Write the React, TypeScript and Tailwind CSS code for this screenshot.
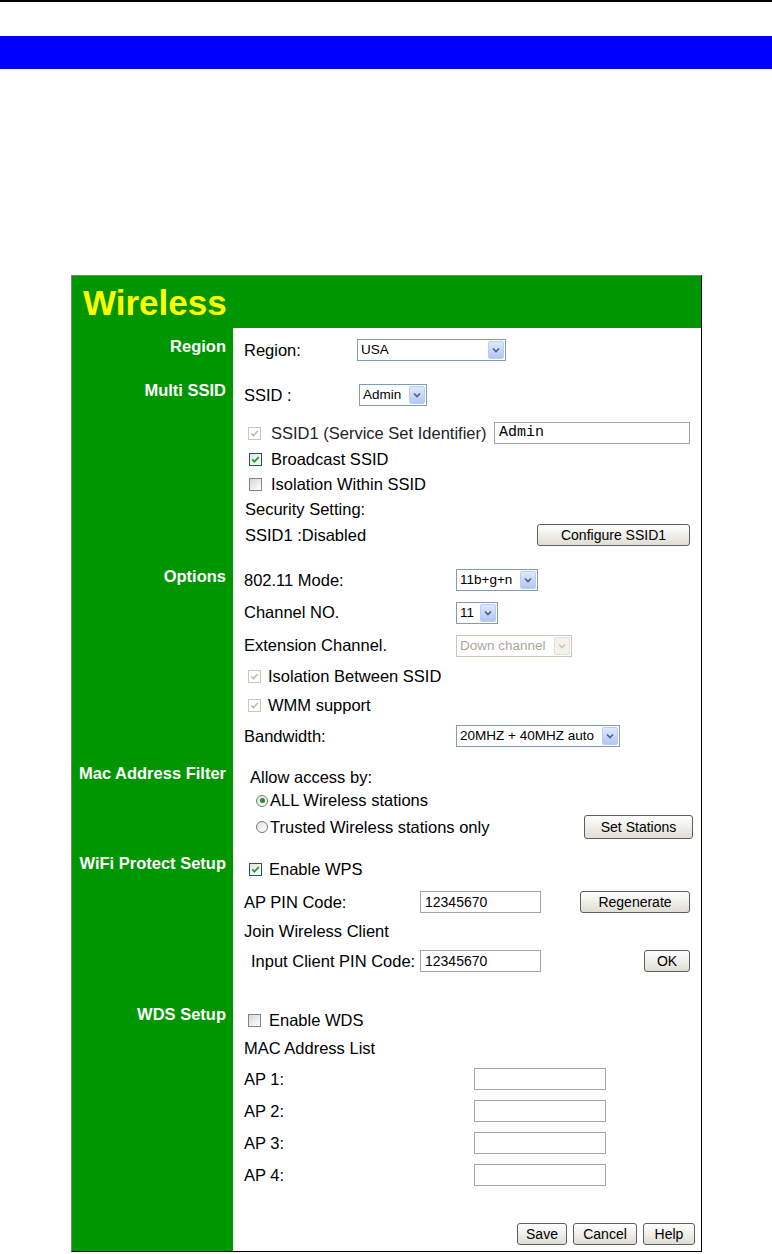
import React from 'react';

function Select({ value, w, disabled }: { value: string; w: string; disabled?: boolean }) {
  return (
    <div
      className={`${w} flex h-[22px] items-center border bg-white ${
        disabled ? 'border-[#c9c7ba] text-[#aca899]' : 'border-[#7f9db9] text-black'
      }`}
    >
      <span className="flex-1 truncate pl-[3px] text-[13.5px] leading-none">{value}</span>
      <span
        className={`m-px flex h-[18px] w-[16px] shrink-0 items-center justify-center rounded-[2px] border ${
          disabled ? 'border-[#e2e0d6] bg-[#f3f2ec]' : 'border-[#bccdf3] bg-linear-to-b from-[#dfe8fc] to-[#b3c7f4]'
        }`}
      >
        <svg viewBox="0 0 16 16" className="h-[12px] w-[12px]">
          <path d="M4 6 L8 10 L12 6" fill="none" stroke={disabled ? '#c9c7ba' : '#4d6185'} strokeWidth="2.2" />
        </svg>
      </span>
    </div>
  );
}

function Box({ checked, disabled }: { checked?: boolean; disabled?: boolean }) {
  return (
    <span
      className={`flex h-[13px] w-[13px] shrink-0 items-center justify-center border ${
        disabled
          ? 'border-[#cac8bb] bg-white'
          : checked
            ? 'border-[#1c5180] bg-linear-to-br from-[#e4e4df] to-white'
            : 'border-[#7a8796] bg-linear-to-br from-[#d8d8d2] to-white'
      }`}
    >
      {checked && (
        <svg viewBox="0 0 11 11" className="h-[11px] w-[11px]">
          <path
            d="M2.3 5.3 L4.5 7.6 L8.8 3"
            fill="none"
            stroke={disabled ? '#c4c2b4' : '#21a121'}
            strokeWidth="1.8"
          />
        </svg>
      )}
    </span>
  );
}

function Radio({ checked }: { checked?: boolean }) {
  return (
    <span className="flex h-[12px] w-[12px] shrink-0 items-center justify-center rounded-full border border-[#6e7c8a] bg-linear-to-br from-[#e2e2dc] to-white">
      {checked && <span className="h-[5px] w-[5px] rounded-full bg-[#2a8a2a]" />}
    </span>
  );
}

function Btn({ label, w }: { label: string; w: string }) {
  return (
    <button
      type="button"
      className={`${w} flex h-[22px] items-center justify-center rounded-[3px] border border-[#5e5e5e] bg-linear-to-b from-white to-[#dfded4] text-[14px] leading-none text-black`}
    >
      {label}
    </button>
  );
}

function Field({ value, w, mono }: { value?: string; w: string; mono?: boolean }) {
  return (
    <input
      readOnly
      defaultValue={value}
      className={`${w} h-[22px] shrink-0 border border-[#9ea6ae] bg-white pl-[4px] text-black outline-none ${
        mono ? "font-['Liberation_Mono',monospace] text-[15px]" : 'text-[14px]'
      }`}
    />
  );
}

function Label({ text, pt }: { text: string; pt: string }) {
  return <div className={`${pt} pr-[7px] text-right text-[16.5px] font-bold leading-[20px] text-white`}>{text}</div>;
}

export default function App() {
  return (
    <div className="min-h-[1254px] bg-white font-['Liberation_Sans',Arial,sans-serif] text-[16.5px] text-black">
      <div className="h-[2px] bg-black" />
      <div className="mt-[34px] h-[33px] bg-[#0000ff]" />

      <div className="ml-[71px] mt-[206px] w-[631px] border-t border-r border-b border-l border-t-[#808080] border-l-[#808080] border-r-black border-b-black bg-[#009600]">
        <div className="h-[52px] pl-[11px] pt-[10px] text-[35px] font-bold leading-[34px] text-[#ffff00]">Wireless</div>

        <div className="grid grid-cols-[161px_1fr]">
          {/* Region */}
          <Label text="Region" pt="pt-[8px]" />
          <div className="bg-white pl-[11px] pr-[11px] pt-[6px] pb-[6px]">
            <div className="flex h-[32px] items-center">
              <span className="w-[113px]">Region:</span>
              <Select value="USA" w="w-[149px]" />
            </div>
          </div>

          {/* Multi SSID */}
          <Label text="Multi SSID" pt="pt-[8px]" />
          <div className="bg-white pl-[11px] pr-[11px] pt-[7px] pb-[8px]">
            <div className="flex h-[32px] items-center">
              <span className="w-[115px]">SSID :</span>
              <Select value="Admin" w="w-[68px]" />
            </div>
            <div className="mt-[9px] flex h-[26px] items-center pl-[4px]">
              <Box checked disabled />
              <span className="ml-[10px] text-[#222]">SSID1 (Service Set Identifier)</span>
              <span className="ml-auto flex">
                <Field value="Admin" w="w-[196px]" mono />
              </span>
            </div>
            <div className="flex h-[26px] items-center pl-[5px]">
              <Box checked />
              <span className="ml-[9px]">Broadcast SSID</span>
            </div>
            <div className="flex h-[25px] items-center pl-[5px]">
              <Box />
              <span className="ml-[9px]">Isolation Within SSID</span>
            </div>
            <div className="flex h-[25px] items-center pl-px">Security Setting:</div>
            <div className="flex h-[26px] items-center pl-px">
              <span>SSID1 :Disabled</span>
              <span className="ml-auto">
                <Btn label="Configure SSID1" w="w-[153px]" />
              </span>
            </div>
          </div>

          {/* Options */}
          <Label text="Options" pt="pt-[10px]" />
          <div className="bg-white pl-[11px] pr-[11px] pt-[8px] pb-[4px]">
            <div className="flex h-[32px] items-center">
              <span className="w-[212px]">802.11 Mode:</span>
              <Select value="11b+g+n" w="w-[82px]" />
            </div>
            <div className="flex h-[33px] items-center">
              <span className="w-[212px]">Channel NO.</span>
              <Select value="11" w="w-[42px]" />
            </div>
            <div className="flex h-[33px] items-center">
              <span className="w-[212px]">Extension Channel.</span>
              <Select value="Down channel" w="w-[116px]" disabled />
            </div>
            <div className="flex h-[28px] items-center pl-[4px]">
              <Box checked disabled />
              <span className="ml-[7px]">Isolation Between SSID</span>
            </div>
            <div className="flex h-[30px] items-center pl-[4px]">
              <Box checked disabled />
              <span className="ml-[7px]">WMM support</span>
            </div>
            <div className="flex h-[32px] items-center">
              <span className="w-[212px]">Bandwidth:</span>
              <Select value="20MHZ + 40MHZ auto" w="w-[164px]" />
            </div>
          </div>

          {/* Mac Address Filter */}
          <Label text="Mac Address Filter" pt="pt-[7px]" />
          <div className="bg-white pl-[11px] pr-[8px] pt-[9px] pb-[5px]">
            <div className="flex h-[24px] items-center pl-[6px]">Allow access by:</div>
            <div className="flex h-[23px] items-center pl-[12px]">
              <Radio checked />
              <span className="ml-[2px]">ALL Wireless stations</span>
            </div>
            <div className="flex h-[30px] items-center pl-[12px]">
              <Radio />
              <span className="ml-[2px]">Trusted Wireless stations only</span>
              <span className="ml-auto">
                <Btn label="Set Stations" w="w-[109px] h-[24px]" />
              </span>
            </div>
          </div>

          {/* WiFi Protect Setup */}
          <Label text="WiFi Protect Setup" pt="pt-[6px]" />
          <div className="bg-white pl-[11px] pr-[11px] pt-[6px] pb-[17px]">
            <div className="flex h-[32px] items-center pl-[5px]">
              <Box checked />
              <span className="ml-[7px]">Enable WPS</span>
            </div>
            <div className="flex h-[34px] items-center">
              <span className="w-[176px]">AP PIN Code:</span>
              <Field value="12345670" w="w-[121px]" />
              <span className="ml-auto">
                <Btn label="Regenerate" w="w-[110px]" />
              </span>
            </div>
            <div className="flex h-[24px] items-center">Join Wireless Client</div>
            <div className="flex h-[36px] items-center pl-[7px]">
              <span className="w-[169px]">Input Client PIN Code:</span>
              <Field value="12345670" w="w-[121px]" />
              <span className="ml-auto">
                <Btn label="OK" w="w-[46px]" />
              </span>
            </div>
          </div>

          {/* WDS Setup */}
          <Label text="WDS Setup" pt="pt-[8px]" />
          <div className="bg-white pl-[11px] pr-[6px] pt-[10px] pb-[5px]">
            <div className="flex h-[28px] items-center pl-[4px]">
              <Box />
              <span className="ml-[8px]">Enable WDS</span>
            </div>
            <div className="flex h-[29px] items-center">MAC Address List</div>
            {['AP 1:', 'AP 2:', 'AP 3:', 'AP 4:'].map((ap) => (
              <div key={ap} className="flex h-[32px] items-center">
                <span className="w-[230px]">{ap}</span>
                <Field w="w-[132px]" />
              </div>
            ))}
            <div className="mt-[31px] flex h-[24px] items-center justify-end gap-[6px]">
              <Btn label="Save" w="w-[50px]" />
              <Btn label="Cancel" w="w-[64px]" />
              <Btn label="Help" w="w-[52px]" />
            </div>
          </div>
        </div>
      </div>
    </div>
  );
}
